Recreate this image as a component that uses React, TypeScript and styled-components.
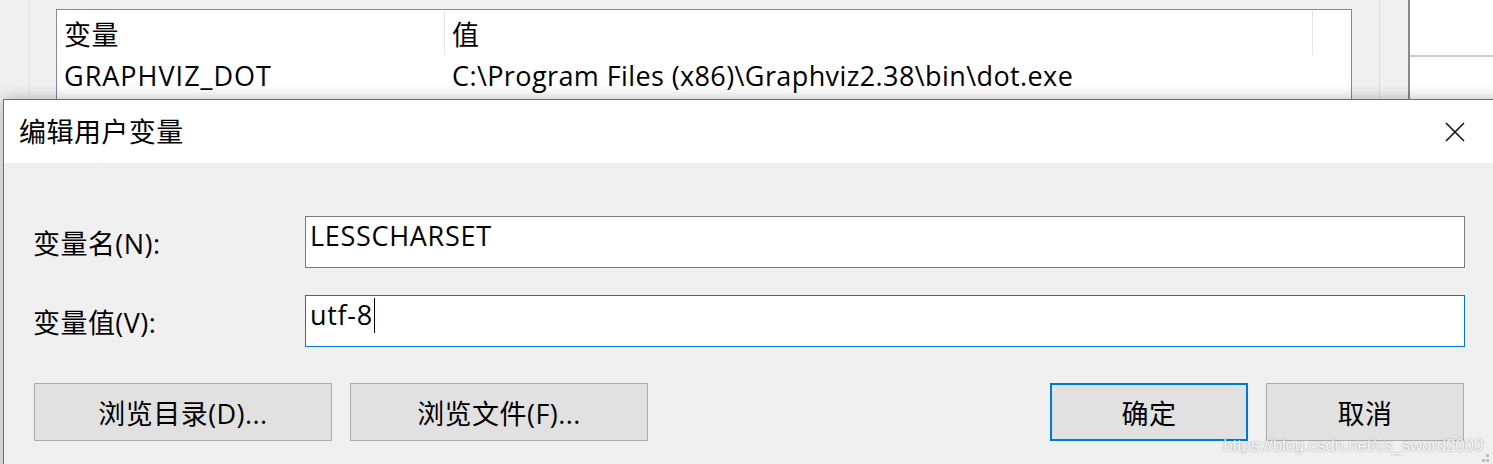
import React from "react";
import styled, { createGlobalStyle } from "styled-components";

const FONT = `"Open Sans", "Noto Sans CJK SC", "Noto Sans", sans-serif`;

const GlobalStyle = createGlobalStyle`
  *, *::before, *::after { box-sizing: border-box; }
  html, body { margin: 0; padding: 0; background: #f0f0f0; }
  body { font-family: ${FONT}; }
`;

const Page = styled.div`
  position: relative;
  width: 1493px;
  height: 464px;
  overflow: hidden;
  background: #f0f0f0;
  font-family: ${FONT};
  font-size: 27px;
  letter-spacing: 0.45px;
  color: #000;
`;

/* ---- window behind the dialog ---- */

const Desktop = styled.div`
  display: flex;
  height: 100%;
`;

const EnvWindow = styled.div`
  display: flex;
  width: 1410px;
  background: #f0f0f0;
  border-right: 2px solid #8a8a8a;
  box-shadow: 2px 0 5px rgba(0, 0, 0, 0.18);
`;

const SideStrip = styled.div`
  width: 30px;
  border-right: 1px solid #e2e2e2;
`;

const ListArea = styled.div`
  width: 1350px;
  padding: 9px 0 0 26px;
  border-right: 1px solid #dcdcdc;
`;

const ListBox = styled.div`
  width: 1296px;
  height: 150px;
  background: #fff;
  border: 1px solid #828790;
`;

const ListRow = styled.div`
  display: grid;
  grid-template-columns: 388px 868px;
  height: ${(p: { $h: number }) => p.$h}px;
`;

const HeadCell = styled.div`
  display: flex;
  align-items: center;
  margin: 1px 0;
  padding-left: 7px;
  border-right: 1px solid #e5e5e5;
  white-space: nowrap;
`;

const Cell = styled.div<{ $wide?: boolean }>`
  display: flex;
  align-items: center;
  padding: 0 0 2px 7px;
  white-space: nowrap;
  letter-spacing: ${(p) => (p.$wide ? "1px" : "0.4px")};
`;

const OtherWindow = styled.div`
  flex: 1;
  background: #fff;
  padding-top: 55px;
`;

const Rule = styled.div`
  height: 2px;
  background: #cdcdcd;
`;

/* ---- dialog ---- */

const Dialog = styled.div`
  position: absolute;
  left: 3px;
  top: 99px;
  width: 1520px;
  height: 400px;
  background: #f0f0f0;
  border: 1px solid #6f6f6f;
  box-shadow: 0 0 14px rgba(0, 0, 0, 0.28);
`;

const TitleBar = styled.div`
  display: flex;
  align-items: center;
  justify-content: space-between;
  height: 63px;
  padding: 0 57px 0 15px;
  background: #fff;
`;

const Title = styled.div`
  font-size: 27px;
  line-height: 1;
`;

const Body = styled.div`
  padding: 53px 57px 0 29px;
`;

const FormGrid = styled.div`
  display: grid;
  grid-template-columns: 272px 1fr;
  row-gap: 27px;
  align-items: center;
`;

const Label = styled.div`
  white-space: nowrap;
`;

const Field = styled.div<{ $focused?: boolean }>`
  display: flex;
  align-items: flex-start;
  height: 52px;
  padding: 1px 4px 0;
  background: #fff;
  border: 1px solid ${(p) => (p.$focused ? "#0078d7" : "#7a7a7a")};
`;

const FieldText = styled.span`
  line-height: 36px;
  letter-spacing: 0.7px;
`;

const Caret = styled.span`
  width: 1px;
  height: 35px;
  margin: 1px 0 0 1px;
  background: #000;
`;

const ButtonRow = styled.div`
  display: flex;
  justify-content: space-between;
  margin-top: 36px;
  padding: 0 1px;
`;

const ButtonGroup = styled.div`
  display: flex;
  gap: 18px;
`;

const Button = styled.div<{ $w: number; $default?: boolean }>`
  display: flex;
  align-items: center;
  justify-content: center;
  width: ${(p) => p.$w}px;
  height: 58px;
  background: #e1e1e1;
  border: ${(p) => (p.$default ? "2px solid #0078d7" : "1px solid #adadad")};
  white-space: nowrap;
`;

const Watermark = styled.div`
  position: absolute;
  right: 10px;
  bottom: 8px;
  font-family: "Liberation Sans", Arial, sans-serif;
  font-size: 17px;
  color: rgba(255, 255, 255, 0.9);
  text-shadow: 0 0 2px rgba(0, 0, 0, 0.4);
  letter-spacing: -0.2px;
`;

const Grip = styled.svg`
  position: absolute;
  right: 3px;
  bottom: 0;
`;

const CloseIcon = () => (
  <svg width="20" height="20" viewBox="0 0 20 20">
    <path d="M1 1 L19 19 M19 1 L1 19" stroke="#111" strokeWidth="1.6" />
  </svg>
);

export default function App() {
  return (
    <>
      <GlobalStyle />
      <Page>
        <Desktop>
          <EnvWindow>
            <SideStrip />
            <ListArea>
              <ListBox>
                <ListRow $h={46}>
                  <HeadCell>变量</HeadCell>
                  <HeadCell>值</HeadCell>
                </ListRow>
                <ListRow $h={40}>
                  <Cell $wide>GRAPHVIZ_DOT</Cell>
                  <Cell>C:\Program Files (x86)\Graphviz2.38\bin\dot.exe</Cell>
                </ListRow>
              </ListBox>
            </ListArea>
          </EnvWindow>
          <OtherWindow>
            <Rule />
          </OtherWindow>
        </Desktop>

        <Dialog>
          <TitleBar>
            <Title>编辑用户变量</Title>
            <CloseIcon />
          </TitleBar>
          <Body>
            <FormGrid>
              <Label>变量名(N):</Label>
              <Field>
                <FieldText>LESSCHARSET</FieldText>
              </Field>
              <Label>变量值(V):</Label>
              <Field $focused>
                <FieldText>utf-8</FieldText>
                <Caret />
              </Field>
            </FormGrid>
            <ButtonRow>
              <ButtonGroup>
                <Button $w={298}>浏览目录(D)...</Button>
                <Button $w={298}>浏览文件(F)...</Button>
              </ButtonGroup>
              <ButtonGroup>
                <Button $w={198} $default>
                  确定
                </Button>
                <Button $w={198}>取消</Button>
              </ButtonGroup>
            </ButtonRow>
          </Body>
        </Dialog>

        <Watermark>https://blog.csdn.net/cs_sword2000</Watermark>
        <Grip width="12" height="10" viewBox="0 0 12 10">
          <rect x="8" y="0" width="3" height="3" fill="#bdbdbd" />
          <rect x="4" y="5" width="3" height="3" fill="#bdbdbd" />
          <rect x="8" y="5" width="3" height="3" fill="#bdbdbd" />
        </Grip>
      </Page>
    </>
  );
}
